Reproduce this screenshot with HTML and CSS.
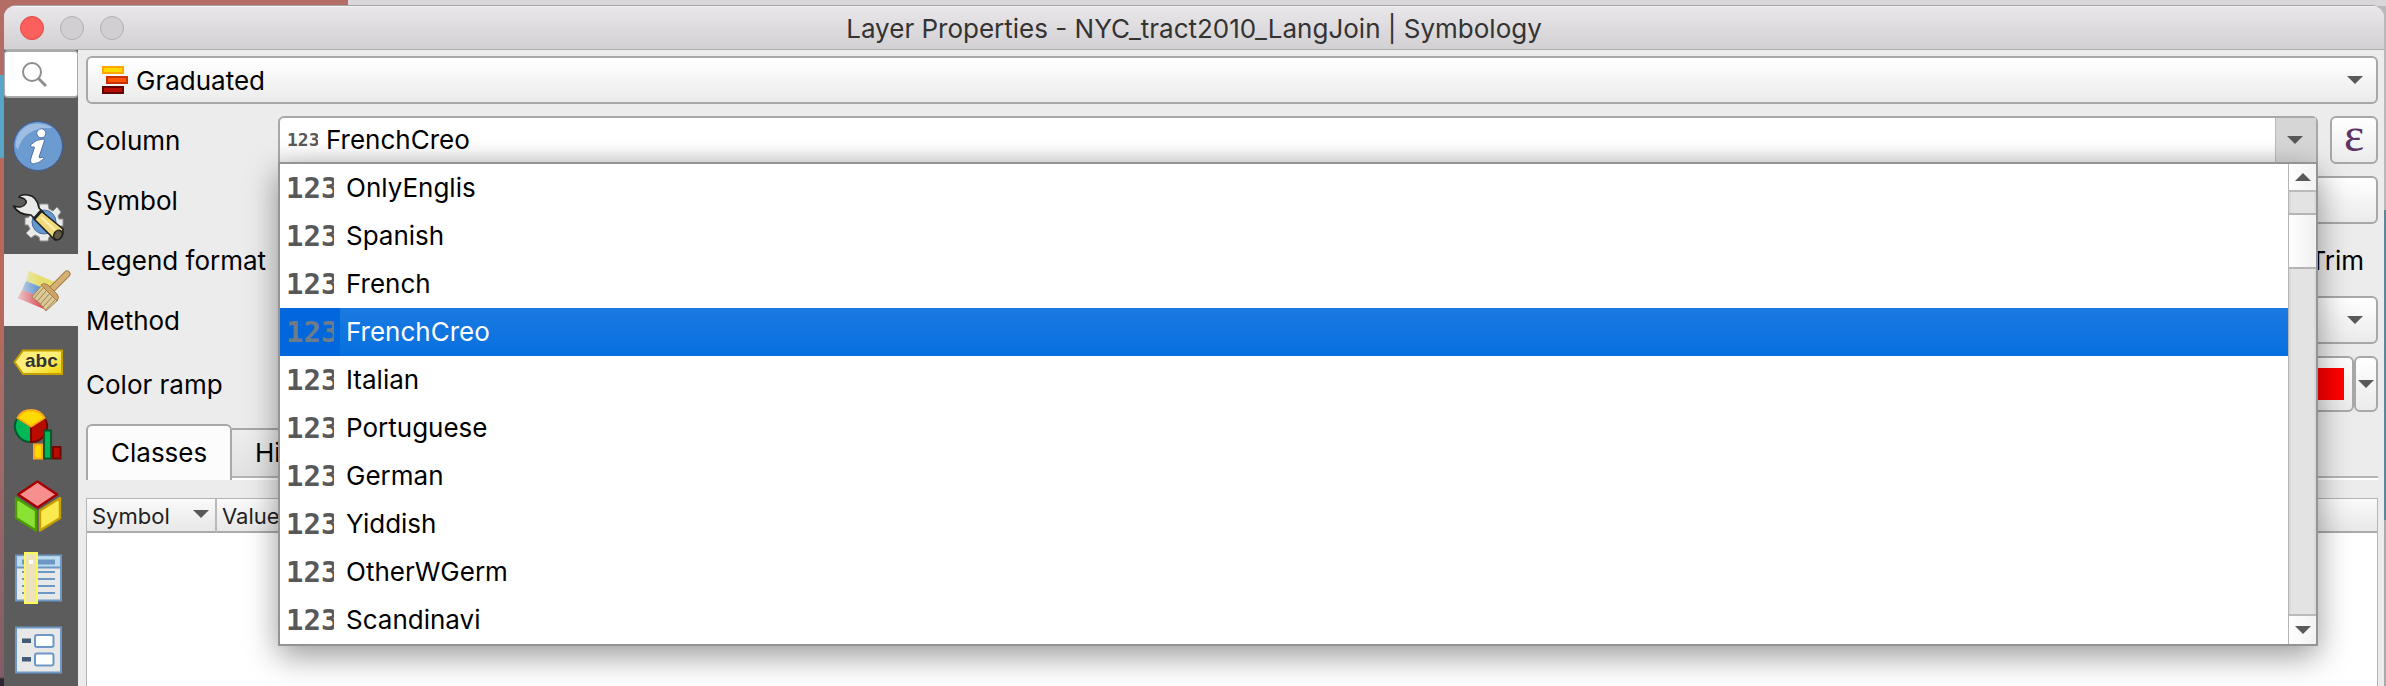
FILE: index.html
```html
<!DOCTYPE html>
<html lang="en">
<head>
<meta charset="utf-8">
<title>Layer Properties - NYC_tract2010_LangJoin | Symbology</title>
<link rel="stylesheet" href="styles.css">
</head>
<body>
<div class="window">
  <header class="titlebar">
    <div class="lights">
      <button class="light close" aria-label="Close"></button>
      <button class="light" aria-label="Minimize"></button>
      <button class="light" aria-label="Zoom"></button>
    </div>
    <h1 class="title">Layer Properties - NYC_tract2010_LangJoin | Symbology</h1>
    <div></div>
  </header>
  <div class="body">
    <nav class="sidebar" aria-label="Sections">
      <div class="search">
        <svg width="26" height="26" viewBox="0 0 26 26" fill="none" stroke="#8e8e8e"><circle cx="11" cy="11" r="9" stroke-width="2"/><path d="M17.500 17.500L25 25" stroke-width="3"/></svg>
        <input class="search-input" type="text" aria-label="Search">
      </div>
      <div class="sections">
        <button class="section" aria-label="Information">
          <svg width="74" height="72" viewBox="0 0 74 72"><circle cx="34" cy="36" r="24.500" fill="#6b9bd0" stroke="#3b5c98"/><path d="M11.500 36C12 22 22 13 34 13.500C42 14 46 16 48 18C30 17 18 24 14 40Z" fill="#9dbde2"/><circle cx="37.300" cy="23.300" r="4.500" fill="#fff" stroke="#3b5c98" stroke-width=".8"/><path d="M26.500 35Q32 29 39.500 29Q41 30 40 32L35 47Q35 49 39 47L40 48.500Q35 53.500 29 54Q25.500 53 27 48L30.500 37.500Q30 36 27.500 37.500Z" fill="#fff" stroke="#3b5c98" stroke-width=".8"/></svg>
        </button>
        <button class="section" aria-label="Source">
          <svg width="74" height="72" viewBox="0 0 74 72"><g stroke-linejoin="round"><path d="M36 22H44L45 27L49 29L53 25L57 30L54 34L55 37H59V44H55L54 48L57 51L52 56L48 53L45 55L44 59H36L35 55L31 53L27 56L22 51L26 47L24 43H21V36L25 35L26 31L23 28L27 24L31 28L35 26Z" fill="#e9ebea" stroke="#8b8d8c"/><circle cx="40" cy="40" r="12" fill="#6598d0" stroke="#4c6f9d"/><path d="M9.500 24C14 32 22 33 27 33L32 38L40 31L35 26C34 20 32 14 24 13C20 12.500 16 13 15 15C20 16 23 18 22 21C20 25 15 26 9.500 24Z" fill="#e7eae7" stroke="#1d1d1b" stroke-width="1.600"/><path d="M37 29L59 47Q60 57 51 58L30 37Z" fill="#f1d97c" stroke="#1d1d1b" stroke-width="1.600"/><path d="M38 28L30 37" stroke="#222" stroke-width="3"/><path d="M37 35L51 48" stroke="#fff3b0" stroke-width="2"/><ellipse cx="54" cy="53" rx="4" ry="5" transform="rotate(35 54 53)" fill="#5d5944" stroke="#1d1d1b" stroke-width="1.500"/></g></svg>
        </button>
        <button class="section current" aria-label="Symbology" aria-current="page">
          <svg width="74" height="72" viewBox="0 0 74 72"><defs><linearGradient id="fade" x1="0" x2="1" y1="0" y2="0"><stop offset="0" stop-color="#ececec" stop-opacity=".75"/><stop offset=".6" stop-color="#ececec" stop-opacity="0"/></linearGradient></defs><path d="M25 17L51 28L44 36L22 27Z" fill="#e6df6c"/><path d="M22 27L42 35L36 43L18 36Z" fill="#5f92cf"/><path d="M18 36L34 42L42 56L14 44Z" fill="#de5560"/><path d="M25 17L51 28L42 56L14 44Z" fill="url(#fade)"/><path d="M49 34L63 20" stroke="#a37c42" stroke-width="7" stroke-linecap="round"/><path d="M49 34L63 20" stroke="#d5b176" stroke-width="5" stroke-linecap="round"/><path d="M38 31L28 43Q37 49 42 57L54 46Z" fill="#ddc898" stroke="#a58a58"/><path d="M40 33L30.500 44M43 36L33.500 47M46 39L36.500 50M49 42L39 53M52 45L41.500 56" stroke="#9b8357"/><path d="M37 31Q40 28 44 31L53 40Q56 43 53 47Z" fill="#cca467" stroke="#a37c42"/></svg>
        </button>
        <button class="section" aria-label="Labels">
          <svg width="74" height="72" viewBox="0 0 74 72"><defs><linearGradient id="tag" x1="0" x2="1" y1="0" y2="1"><stop offset=".5" stop-color="#ffef78"/><stop offset="1" stop-color="#eed500"/></linearGradient></defs><path d="M10.500 36L19 24.500H58V48H19Z" fill="url(#tag)" stroke="#c4a000" stroke-width="2"/><text class="tag-text" x="21" y="41">abc</text></svg>
        </button>
        <button class="section" aria-label="Diagrams">
          <svg width="74" height="72" viewBox="0 0 74 72" stroke-width="2"><path d="M27 28.500V44A15.500 15.500 0 0 1 13.500 20Z" fill="#00b956" stroke="#00592b"/><path d="M27 28.500V44A15.500 15.500 0 0 0 40.500 20Z" fill="#b80c00" stroke="#720800"/><path d="M27 28.500L13.500 20A15.500 15.500 0 0 1 40.500 20Z" fill="#ffda00" stroke="#ffa716"/><path d="M30 46.500H38V60.500H30Z" fill="#ffda00" stroke="#ffa716"/><path d="M40 32.500H47V60.500H40Z" fill="#00b956" stroke="#00592b"/><path d="M49 49H56.500V60.500H49Z" fill="#b80c00" stroke="#720800"/></svg>
        </button>
        <button class="section" aria-label="3D View">
          <svg width="74" height="72" viewBox="0 0 74 72" stroke-width="2.400" stroke-linejoin="round"><path d="M12 28L32 40.500V60.500L12 48Z" fill="#8ae234" stroke="#4e9a06"/><path d="M56 28L36 40.500V60.500L56 48Z" fill="#fce94f" stroke="#c4a000"/><path d="M33.500 11.500L53 24.500L33.500 37.500L14 24.500Z" fill="#f78f8f" stroke="#a40000"/></svg>
        </button>
        <button class="section" aria-label="Fields">
          <svg width="74" height="72" viewBox="0 0 74 72"><path d="M12 13.500H57V58.500H12Z" fill="#e8e8e8" stroke="#6d97c4" stroke-width="2"/><path d="M13 14.500H56V25H13Z" fill="#bddbef"/><path d="M12 25.500H57" stroke="#6d97c4" stroke-width="2"/><path d="M18 20H51" stroke="#6d97c4" stroke-width="5"/><path d="M18 30H51M18 37H51M18 44H51M18 51H51" stroke="#6d97c4" stroke-width="2"/><path d="M21 11H33V61H21Z" fill="#ede2b8" stroke="#fcf95c" stroke-width="2"/><path d="M25 18H29V22H25Z" fill="#fff"/></svg>
        </button>
        <button class="section" aria-label="Attributes Form">
          <svg width="74" height="72" viewBox="0 0 74 72"><path d="M12 13.500H57V58.500H12Z" fill="#e8e8e8" stroke="#6d97c4" stroke-width="2"/><path d="M18 24.500H27V29H18ZM18 43H27V47.500H18Z" fill="#415a75"/><g fill="#fcffff" stroke="#6d97c4" stroke-width="2"><rect x="31" y="21" width="18.500" height="12" rx="2"/><rect x="31" y="39.500" width="18.500" height="12" rx="2"/></g></svg>
        </button>
      </div>
    </nav>

    <main class="panel">
      <div class="picker">
        <svg class="picker-icon" width="26" height="28" viewBox="0 0 26 28" stroke-width="2"><path d="M1 1H21V7H1Z" fill="#ffda00" stroke="#ffa500"/><path d="M5 11H25V17H5Z" fill="#ff5500" stroke="#c83200"/><path d="M1 21H21V27H1Z" fill="#b80c00" stroke="#5f0700"/></svg>
        <select class="select with-icon" aria-label="Renderer"><option>Graduated</option></select>
        <svg class="arrow" width="16" height="8" viewBox="0 0 16 8"><path d="M0 0H16L8 8Z"/></svg>
      </div>

      <div class="form">
        <label for="column">Column</label>
        <div class="column-row">
          <div class="combo">
            <span class="num small">123</span>
            <input class="combo-input" id="column" type="text" value="FrenchCreo" role="combobox" aria-expanded="true" aria-controls="fields">
            <button class="combo-button" aria-label="Show fields"><svg width="16" height="8" viewBox="0 0 16 8"><path d="M0 0H16L8 8Z"/></svg></button>
            <div class="popup">
              <ul class="options" id="fields" role="listbox" aria-label="Column">
                <li class="option" role="option"><span class="num">123</span><span class="name">OnlyEnglis</span></li>
                <li class="option" role="option"><span class="num">123</span><span class="name">Spanish</span></li>
                <li class="option" role="option"><span class="num">123</span><span class="name">French</span></li>
                <li class="option selected" role="option" aria-selected="true"><span class="num">123</span><span class="name">FrenchCreo</span></li>
                <li class="option" role="option"><span class="num">123</span><span class="name">Italian</span></li>
                <li class="option" role="option"><span class="num">123</span><span class="name">Portuguese</span></li>
                <li class="option" role="option"><span class="num">123</span><span class="name">German</span></li>
                <li class="option" role="option"><span class="num">123</span><span class="name">Yiddish</span></li>
                <li class="option" role="option"><span class="num">123</span><span class="name">OtherWGerm</span></li>
                <li class="option" role="option"><span class="num">123</span><span class="name">Scandinavi</span></li>
              </ul>
              <div class="scrollbar">
                <button class="scroll-up" aria-label="Scroll up"><svg width="16" height="8" viewBox="0 0 16 8"><path d="M0 8H16L8 0Z"/></svg></button>
                <div class="track"><div class="thumb"></div></div>
                <button class="scroll-down" aria-label="Scroll down"><svg width="16" height="8" viewBox="0 0 16 8"><path d="M0 0H16L8 8Z"/></svg></button>
              </div>
            </div>
          </div>
          <button class="push expression" aria-label="Expression">ε</button>
        </div>

        <label for="symbol">Symbol</label>
        <button class="push" id="symbol"></button>

        <label for="legend">Legend format</label>
        <div class="legend-row">
          <input class="text-box" id="legend" type="text">
          <label class="trim"><input type="checkbox">Trim</label>
        </div>

        <label for="method">Method</label>
        <div class="picker">
          <select class="select" id="method"><option></option></select>
          <svg class="arrow" width="16" height="8" viewBox="0 0 16 8"><path d="M0 0H16L8 8Z"/></svg>
        </div>

        <label for="ramp">Color ramp</label>
        <div class="ramp-row">
          <button class="push ramp" id="ramp"><span class="ramp-fill"></span></button>
          <button class="push ramp-menu" aria-label="Color ramp menu"><svg width="16" height="8" viewBox="0 0 16 8"><path d="M0 0H16L8 8Z"/></svg></button>
        </div>
      </div>

      <div class="tabs" role="tablist">
        <button class="tab active" role="tab" aria-selected="true">Classes</button>
        <button class="tab" role="tab">Histogram</button>
      </div>

      <div class="table-frame">
        <table class="classes">
          <thead>
            <tr>
              <th class="symbol-col"><span class="head">Symbol<svg width="16" height="8" viewBox="0 0 16 8"><path d="M0 0H16L8 8Z"/></svg></span></th>
              <th class="values-col">Values</th>
              <th>Legend</th>
            </tr>
          </thead>
        </table>
      </div>
    </main>
  </div>
</div>
</body>
</html>
```

FILE: styles.css
```css
* { box-sizing: border-box; }

body {
  margin: 0;
  height: 100vh;
  overflow: hidden;
  display: flex;
  padding: 5px 2px 0 4px;
  font: 26px/30px Inter, "Liberation Sans", sans-serif;
  color: #000;
  background:
    linear-gradient(#d9d7da, #d9d7da) 348px 0 / 100% 6px no-repeat,
    linear-gradient(#b9b9b9 0 210px, #5f8794 210px 520px, #aaa 520px) right / 20px 100% no-repeat,
    linear-gradient(#b46c66 0 75px, #57a5c7 75px 158px, #b9695c 158px 300px, #a66c69 420px, #7f5d66 677px, #2c2633 679px) left / 20px 100% no-repeat,
    #b46c66;
}

button, input, select { font: inherit; color: inherit; margin: 0; }
button { padding: 0; border: 0; background: none; }
svg { display: block; fill: #595959; flex: none; }

.window {
  flex: 1;
  min-width: 0;
  display: flex;
  flex-direction: column;
  border-top: 1px solid #a5a3a6;
  border-radius: 12px 12px 0 0;
  overflow: hidden;
  background: #ececec;
}

.titlebar {
  flex: none;
  height: 44px;
  display: grid;
  grid-template-columns: 1fr auto 1fr;
  align-items: center;
  background: linear-gradient(#eae7ea, #d2d0d2);
  border-bottom: 1px solid #b0aeb0;
  box-shadow: inset 0 1px #f5f3f5;
}
.title { margin: 0; padding-top: 2px; font-size: 26px; font-weight: 400; color: #333; }
.lights { display: flex; gap: 16px; padding-left: 16px; }
.light { width: 24px; height: 24px; border-radius: 50%; border: 1px solid #b1afb1; background: #d1cfd1; }
.close { background: #fc605c; border-color: #de4642; }

.body { flex: 1; min-height: 0; display: flex; }

.sidebar { flex: none; width: 74px; background: #5c5c5c; display: flex; flex-direction: column; gap: 12px; }
.search { display: flex; align-items: center; height: 48px; padding-left: 16px; border: 1px solid #aaa; border-top: 2px solid #aaa; border-bottom: 2px solid #aaa; border-radius: 4px; background: #fff; }
.search svg { fill: none; }
.search-input { flex: 1; min-width: 0; border: 0; background: none; }
.sections { display: flex; flex-direction: column; }
.section { height: 72px; }
.section.current { background: #ececec; }
.tag-text { font: bold 19px "Liberation Sans", sans-serif; fill: #333; }

.panel { flex: 1; min-width: 0; display: flex; flex-direction: column; gap: 12px; padding: 6px 6px 0 8px; }

.picker { display: grid; align-items: center; height: 48px; }
.picker > * { grid-area: 1 / 1; }
.picker-icon { margin-left: 16px; z-index: 1; pointer-events: none; }
.arrow { justify-self: end; margin-right: 15px; pointer-events: none; }
.select, .push, .text-box {
  border: 2px solid #a8a8a8;
  border-radius: 6px;
  background: linear-gradient(#fff, #ebebeb);
}
.select { appearance: none; width: 100%; height: 48px; padding: 2px 48px 0 12px; }
.with-icon { padding-left: 48px; }
.text-box { flex: 1; min-width: 0; background: #fff; }

.form { display: grid; grid-template-columns: 180px minmax(0, 1fr); column-gap: 12px; row-gap: 12px; grid-template-rows: 48px 48px 48px 48px 56px; }
.form > label { align-self: center; padding-top: 2px; white-space: nowrap; }

.column-row { display: flex; gap: 12px; }
.combo { position: relative; flex: 1; min-width: 0; display: flex; align-items: center; border: 2px solid #a8a8a8; border-radius: 6px 6px 0 0; background: linear-gradient(#fff 60%, #eee); padding-left: 7px; gap: 8px; }
.combo-input { flex: 1; min-width: 0; border: 0; padding: 0; background: none; outline: 0; }
.combo-button { width: 41px; align-self: stretch; display: grid; place-items: center; background: #d6d6d6; border-left: 1px solid #b9b9b9; }
.combo-button svg { margin-right: 2px; }
.expression { width: 48px; padding-bottom: 10px; font: 48px/32px "Liberation Serif", serif; color: #5c3566; }

.num { flex: none; overflow: hidden; width: 48px; font: bold 29px/30px "DejaVu Sans Mono", monospace; color: #595959; }
.num.small { width: 31px; font-size: 18px; }

.popup { position: absolute; z-index: 2; top: 44px; left: -2px; right: -2px; display: flex; border: 2px solid #949494; background: #fff; box-shadow: 0 10px 30px rgba(0, 0, 0, .4); }
.options { flex: 1; min-width: 0; margin: 0; padding: 0; list-style: none; }
.option { display: flex; align-items: center; height: 48px; padding-left: 6px; }
.option .name { flex: 1; align-self: stretch; margin-left: 6px; padding-left: 6px; line-height: 48px; }
.option.selected { background: #0267dc; color: #fff; }
.option.selected .name { background: linear-gradient(#1b7ae0, #0670e0); }
.option.selected .num { color: #6f7c8a; }

.scrollbar { width: 28px; display: flex; flex-direction: column; border-left: 1px solid #b4b4b4; }
.scroll-up, .scroll-down { height: 28px; display: grid; place-items: center; background: linear-gradient(90deg, #fff, #f2f2f2); }
.scroll-up { border-bottom: 2px solid #bbb; }
.scroll-down { height: 30px; border-top: 2px solid #bbb; }
.track { flex: 1; padding: 21px 0 0; background: #e3e3e3; box-shadow: inset 2px 0 #dadada, inset -2px 0 #dadada; }
.thumb { height: 56px; border: solid #b4b4b4; border-width: 2px 0; background: linear-gradient(90deg, #fff, #f0f0f0); }

.legend-row { display: flex; gap: 12px; }
.trim { display: flex; align-items: center; gap: 6px; padding: 2px 14px 0 0; }

.ramp-row { display: flex; }
.ramp { flex: 1; display: flex; padding: 10px 8px; }
.ramp-fill { flex: 1; align-self: stretch; background: linear-gradient(90deg, #fff, #f00 98%); }
.ramp-menu { width: 24px; display: grid; place-items: center; }

.tabs { display: flex; align-items: flex-end; height: 54px; border-bottom: 2px solid #b4b4b4; box-shadow: 0 2px #fff; }
.tab { height: 48px; padding: 0 23px; border: 2px solid #a8a8a8; border-left: 0; border-bottom: 0; border-radius: 0 6px 0 0; background: linear-gradient(#eee, #e2e2e2); }
.tab.active { width: 146px; height: 56px; margin-bottom: -4px; border-left: 2px solid #a8a8a8; border-radius: 6px 6px 0 0; background: #fcfcfc; }

.table-frame { flex: 1; margin-top: 8px; border: 1px solid #b4b4b4; border-bottom: 0; background: #fff; }
.classes { width: 100%; table-layout: fixed; border-collapse: separate; border-spacing: 0; }
.classes th { height: 34px; padding: 2px 0 0 5px; text-align: left; font-size: 22px; line-height: 30px; font-weight: 400; color: #222; background: linear-gradient(#fafafa, #e8e8e8); border-bottom: 2px solid #aaa; }
.classes .symbol-col { width: 130px; }
.classes .values-col { width: 300px; }
.classes .symbol-col, .classes .values-col { border-right: 2px solid #b9b9b9; }
.head { display: flex; align-items: center; justify-content: space-between; padding-right: 6px; }
.head svg { margin-bottom: 4px; }
```
